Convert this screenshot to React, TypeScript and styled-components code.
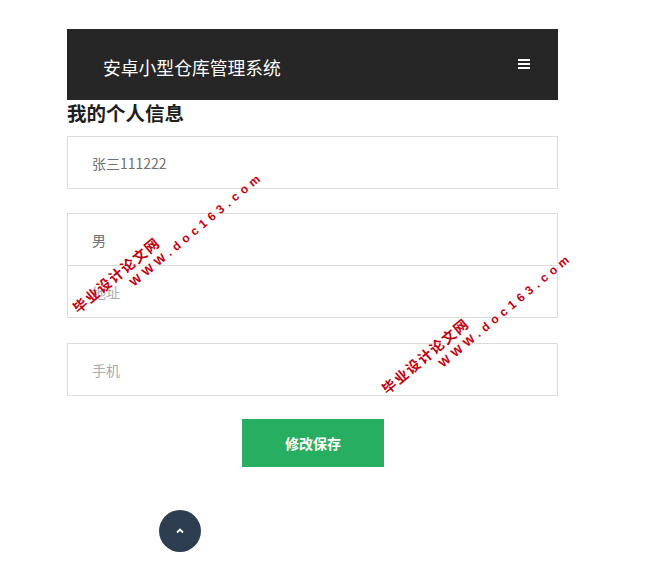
import React from "react";
import styled, { createGlobalStyle } from "styled-components";

const Global = createGlobalStyle`
  html, body { margin: 0; padding: 0; background: #fff; }
  body { font-family: "Noto Sans CJK SC", "Noto Sans", sans-serif; }
  * { box-sizing: border-box; }
`;

const Page = styled.div`
  position: relative;
  width: 648px;
  height: 567px;
  padding: 29px 0 0 67px;
  overflow: hidden;
`;

const Column = styled.div`
  width: 491px;
  display: flex;
  flex-direction: column;
`;

const Header = styled.header`
  height: 71px;
  background: #262626;
  display: flex;
  align-items: center;
  justify-content: space-between;
  padding: 0 28px 0 36px;
`;

const Brand = styled.div`
  color: #fff;
  font-size: 17.8px;
  line-height: 1;
  margin-top: 6px;
`;

const Burger = styled.div`
  width: 12px;
  display: flex;
  flex-direction: column;
  gap: 2px;
  margin-top: -1px;
  span {
    display: block;
    height: 2px;
    background: #fff;
  }
`;

const Title = styled.h2`
  margin: 0;
  font-size: 19.5px;
  font-weight: 700;
  color: #1e1e1e;
  line-height: 24px;
  height: 36px;
  padding-top: 1px;
`;

const Field = styled.div<{ $gap: number; $placeholder?: boolean }>`
  height: 53px;
  margin-top: ${(p) => p.$gap}px;
  border: 1px solid #dcdcdc;
  display: flex;
  align-items: center;
  padding-left: 24px;
  font-size: 14px;
  color: ${(p) => (p.$placeholder ? "#aaa" : "#707070")};
`;

const Actions = styled.div`
  display: flex;
  justify-content: center;
  margin-top: 23px;
  padding-left: 1px;
`;

const SaveButton = styled.button`
  width: 142px;
  height: 48px;
  border: none;
  background: #27ae60;
  color: #fff;
  font-family: inherit;
  font-size: 14px;
  font-weight: 700;
`;

const TopButton = styled.div`
  position: absolute;
  left: 159px;
  top: 510px;
  width: 42px;
  height: 42px;
  border-radius: 50%;
  background: #2c3e50;
  display: flex;
  align-items: center;
  justify-content: center;
`;

const Watermark = styled.div<{ $x: number; $y: number }>`
  position: absolute;
  left: ${(p) => p.$x}px;
  top: ${(p) => p.$y}px;
  transform: rotate(-40deg);
  transform-origin: left top;
  color: #c40010;
  font-weight: 700;
  font-family: "Noto Sans CJK SC", sans-serif;
  pointer-events: none;
  display: flex;
  flex-direction: column;
  line-height: 1;
  white-space: nowrap;
`;

const WmCn = styled.span`
  font-size: 14px;
  letter-spacing: 1.5px;
`;

const WmUrl = styled.span`
  font-family: "Liberation Sans", sans-serif;
  font-size: 12px;
  letter-spacing: 4.6px;
  margin-top: 4px;
  margin-left: 60px;
`;

export default function App() {
  return (
    <>
      <Global />
      <Page>
        <Column>
          <Header>
            <Brand>安卓小型仓库管理系统</Brand>
            <Burger>
              <span />
              <span />
              <span />
            </Burger>
          </Header>
          <Title>我的个人信息</Title>
          <Field $gap={0}>张三111222</Field>
          <Field $gap={24}>男</Field>
          <Field $gap={-1} $placeholder>地址</Field>
          <Field $gap={25} $placeholder>手机</Field>
          <Actions>
            <SaveButton>修改保存</SaveButton>
          </Actions>
        </Column>
        <TopButton>
          <svg width="10" height="8" viewBox="0 0 10 8">
            <path d="M2 5.5 L5 2.5 L8 5.5" fill="none" stroke="#fff" strokeWidth="1.8" />
          </svg>
        </TopButton>
        <Watermark $x={70} $y={304}>
          <WmCn>毕业设计论文网</WmCn>
          <WmUrl>WWW.doc163.com</WmUrl>
        </Watermark>
        <Watermark $x={379} $y={385}>
          <WmCn>毕业设计论文网</WmCn>
          <WmUrl>WWW.doc163.com</WmUrl>
        </Watermark>
      </Page>
    </>
  );
}
